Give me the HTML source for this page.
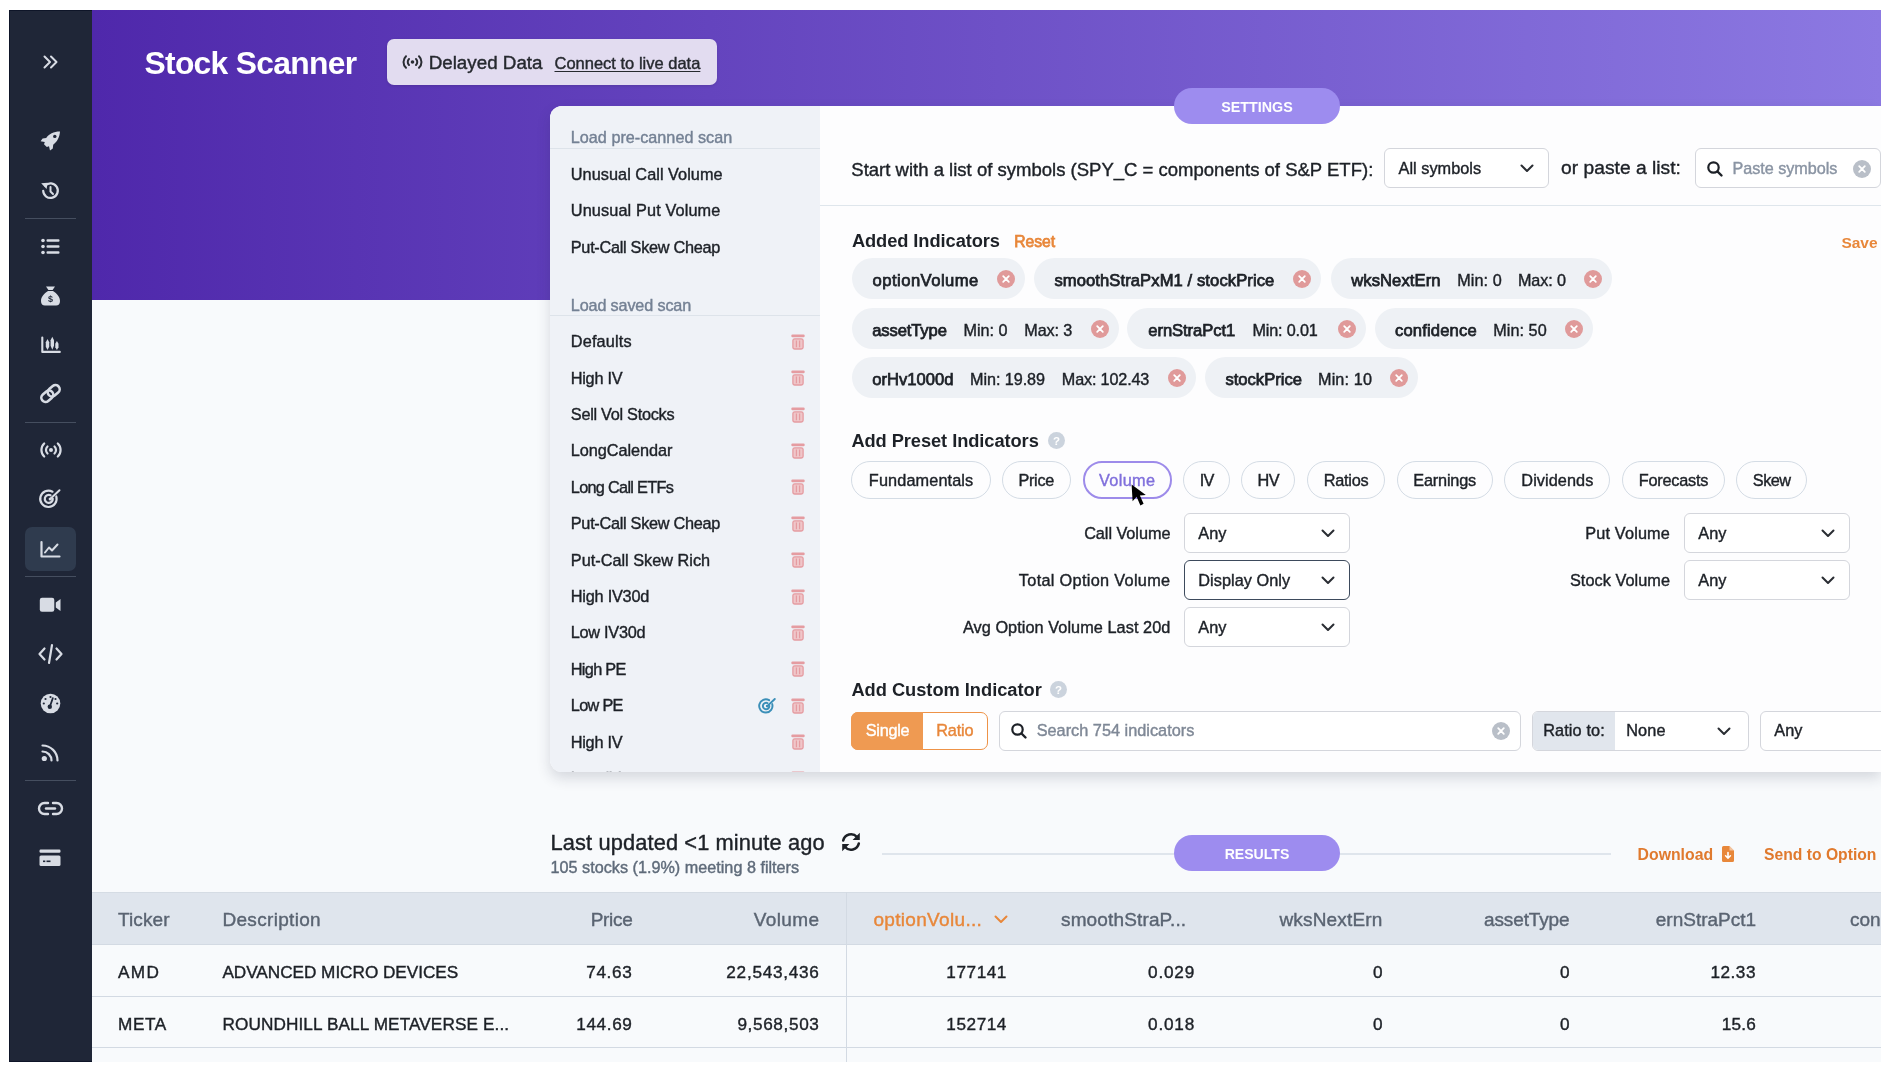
<!DOCTYPE html>
<html><head><meta charset="utf-8"><style>
html,body{margin:0;padding:0;background:#fff;width:1894px;height:1074px;overflow:hidden;}
body{position:relative;font-family:"Liberation Sans",sans-serif;color:#1f2329;}
.a{position:absolute;box-sizing:border-box;}
.t{position:absolute;white-space:nowrap;line-height:normal;}
.s{-webkit-text-stroke:0.4px currentColor;}
.m{-webkit-text-stroke:0.75px currentColor;}
svg{position:absolute;overflow:visible;}
</style></head><body>
<div id="root" style="position:absolute;left:0;top:0;width:1894px;height:1074px;will-change:transform">
<div class="a" style="left:9px;top:10px;width:1872px;height:1052px;background:#f8fafc"></div>
<div class="a" style="left:92px;top:10px;width:1789px;height:290px;background:linear-gradient(90deg,#4f28ab 0%,#8c79e2 100%)"></div>
<div class="a" style="left:9px;top:10px;width:83px;height:1052px;background:#1f2637;border-left:1px solid #0e1528;border-top:1px solid #0e1528;border-bottom:1px solid #0e1528"></div>
<div class="a" style="left:25px;top:218px;width:51px;height:1px;background:#454e5f"></div>
<div class="a" style="left:25px;top:422px;width:51px;height:1px;background:#454e5f"></div>
<div class="a" style="left:25px;top:576px;width:51px;height:1px;background:#454e5f"></div>
<div class="a" style="left:25px;top:780px;width:51px;height:1px;background:#454e5f"></div>
<div class="a" style="left:25px;top:527px;width:51px;height:44px;border-radius:7px;background:#2f3b4e"></div>
<svg style="left:43px;top:55px" width="15" height="14" viewBox="0 0 15 14"><path fill="none" stroke="#d8dce4" stroke-linecap="round" stroke-linejoin="round" stroke-width="2" d="M1.5 1.5 L7 7 L1.5 12.5 M8 1.5 L13.5 7 L8 12.5"/></svg>
<svg style="left:40px;top:131px" width="21" height="20" viewBox="0 0 21 20"><path fill="#d8dce4" d="M20 0.6 C13.5 0.6 9 3.2 6.2 7 L2.6 7.4 L0.6 10.2 L4.8 11 L4 13.2 L6.8 16 L9 15.2 L10 19.6 L12.8 17.4 L13.2 13.8 C17 11 19.6 6.6 20 0.6 Z"/><circle cx="14.8" cy="5.4" r="1.7" fill="#1f2637"/></svg>
<svg style="left:40px;top:181px" width="21" height="20" viewBox="0 0 21 20"><path fill="none" stroke="#d8dce4" stroke-linecap="round" stroke-linejoin="round" stroke-width="2.2" d="M3.2 9.8 A7.3 7.3 0 1 0 5.2 4.6"/><path fill="#d8dce4" d="M1.2 2.2 L7.6 1.8 L6.6 8 Z"/><path fill="none" stroke="#d8dce4" stroke-linecap="round" stroke-linejoin="round" stroke-width="2" d="M10.5 6 V10.5 L13 13"/></svg>
<svg style="left:41px;top:238px" width="19" height="17" viewBox="0 0 19 17"><g fill="#d8dce4"><circle cx="2" cy="2.5" r="1.8"/><circle cx="2" cy="8.5" r="1.8"/><circle cx="2" cy="14.5" r="1.8"/><rect x="5.5" y="1.3" width="13" height="2.4" rx="1"/><rect x="5.5" y="7.3" width="13" height="2.4" rx="1"/><rect x="5.5" y="13.3" width="13" height="2.4" rx="1"/></g></svg>
<svg style="left:40px;top:286px" width="21" height="20" viewBox="0 0 21 20"><path fill="#d8dce4" d="M6 0.5 H15 L12.6 4 H8.4 Z M8 5 H13 C17 7.5 20 11 20 15 C20 18 18.5 19.5 16 19.5 H5 C2.5 19.5 1 18 1 15 C1 11 4 7.5 8 5 Z"/><text x="10.5" y="16.2" font-family="Liberation Sans" font-weight="700" font-size="9" text-anchor="middle" fill="#1f2738">$</text></svg>
<svg style="left:40px;top:336px" width="21" height="18" viewBox="0 0 21 18"><path fill="none" stroke="#d8dce4" stroke-linecap="round" stroke-linejoin="round" stroke-width="2.1" d="M2.3 1.5 V15.9 H19.8"/><g fill="#d8dce4"><path d="M7.5 3 L9.2 6.3 V10.7 L7.5 14 L5.8 10.7 V6.3 Z"/><path d="M12.3 0.8 L14 4.3 V9.8 L12.3 13.8 L10.6 9.8 V4.3 Z"/><path d="M16.9 5 L18.5 7.8 V11.2 L16.9 14 L15.3 11.2 V7.8 Z"/></g></svg>
<svg style="left:39px;top:384px" width="23" height="19" viewBox="0 0 23 19"><g transform="rotate(-40 11.5 9.5)" fill="none" stroke="#d8dce4" stroke-width="2.6"><rect x="0.8" y="5.3" width="13" height="8.4" rx="4.2"/><rect x="9.2" y="5.3" width="13" height="8.4" rx="4.2"/></g></svg>
<svg style="left:40px;top:442px" width="22" height="16" viewBox="0 0 22 16"><g fill="none" stroke="#d8dce4" stroke-linecap="round" stroke-linejoin="round" stroke-width="2.2"><path d="M4.2 1.5 A9 9 0 0 0 4.2 14.5"/><path d="M17.8 1.5 A9 9 0 0 1 17.8 14.5"/><path d="M7.5 4.5 A4.8 4.8 0 0 0 7.5 11.5"/><path d="M14.5 4.5 A4.8 4.8 0 0 1 14.5 11.5"/></g><circle cx="11" cy="8" r="2" fill="#d8dce4"/></svg>
<svg style="left:40px;top:489px" width="21" height="21" viewBox="0 0 21 21"><g fill="none" stroke="#d8dce4" stroke-linecap="round" stroke-linejoin="round" stroke-width="2.2"><path d="M16.3 7.5 A8.2 8.2 0 1 1 12.5 2.7"/><path d="M12.8 9.8 A4 4 0 1 1 10.5 6.3"/></g><path fill="none" stroke="#d8dce4" stroke-linecap="round" stroke-linejoin="round" stroke-width="2" d="M10.2 10 L19.5 1.2"/><circle cx="10.2" cy="10" r="1.6" fill="#d8dce4"/></svg>
<svg style="left:40px;top:541px" width="21" height="17" viewBox="0 0 21 17"><path fill="none" stroke="#d8dce4" stroke-linecap="round" stroke-linejoin="round" stroke-width="2.2" d="M1.5 1 V15.5 H19.5"/><path fill="none" stroke="#d8dce4" stroke-linecap="round" stroke-linejoin="round" stroke-width="2" d="M5 11.5 L9 6.5 L12 9.5 L17.5 3.5"/></svg>
<svg style="left:39px;top:597px" width="23" height="16" viewBox="0 0 23 16"><rect x="0.8" y="0.8" width="14.5" height="14" rx="2.2" fill="#d8dce4"/><path fill="#d8dce4" d="M16.8 5.5 L21.5 2 V14 L16.8 10.5 Z"/></svg>
<svg style="left:38px;top:644px" width="25" height="20" viewBox="0 0 25 20"><g fill="none" stroke="#d8dce4" stroke-linecap="round" stroke-linejoin="round" stroke-width="2.2"><path d="M6.5 4.5 L1.5 10 L6.5 15.5"/><path d="M18.5 4.5 L23.5 10 L18.5 15.5"/><path d="M14 1 L11 19"/></g></svg>
<svg style="left:40px;top:693px" width="21" height="21" viewBox="0 0 21 21"><circle cx="10.5" cy="10.5" r="9.8" fill="#d8dce4"/><g fill="#1f2738"><circle cx="10.5" cy="4" r="1.1"/><circle cx="5.5" cy="6" r="1.1"/><circle cx="15.5" cy="6" r="1.1"/><circle cx="3.8" cy="10.5" r="1.1"/><circle cx="17.2" cy="10.5" r="1.1"/><circle cx="9.8" cy="13.8" r="2.2"/></g><path stroke="#1f2738" stroke-width="1.8" stroke-linecap="round" d="M9.8 13.8 L12.8 5.2"/></svg>
<svg style="left:41px;top:744px" width="19" height="18" viewBox="0 0 19 18"><circle cx="3.3" cy="14.5" r="2.6" fill="#d8dce4"/><g fill="none" stroke="#d8dce4" stroke-linecap="round" stroke-linejoin="round" stroke-width="2.2"><path d="M1.5 7.5 A9 9 0 0 1 10.5 16.5"/><path d="M1.5 1.5 A15 15 0 0 1 16.5 16.5"/></g></svg>
<svg style="left:38px;top:801px" width="25" height="15" viewBox="0 0 25 15"><g fill="none" stroke="#d8dce4" stroke-linecap="round" stroke-linejoin="round" stroke-width="2.4"><path d="M10 2 H6.5 A5.5 5.5 0 0 0 6.5 13 H10"/><path d="M15 2 H18.5 A5.5 5.5 0 0 1 18.5 13 H15"/><path d="M8 7.5 H17"/></g></svg>
<svg style="left:39px;top:849px" width="23" height="18" viewBox="0 0 23 18"><rect x="0.5" y="0.5" width="21" height="3.3" rx="1.2" fill="#d8dce4"/><rect x="0.5" y="6.5" width="21" height="10.5" rx="1.5" fill="#d8dce4"/><rect x="4" y="11.5" width="2.3" height="1.6" fill="#1f2738"/><rect x="7.5" y="11.5" width="4" height="1.6" fill="#1f2738"/></svg>
<div class="t" style="left:144.5px;top:45.0px;font-size:31.8px;font-weight:700;color:#fff;letter-spacing:-0.700px;">Stock Scanner</div>
<div class="a" style="left:387px;top:39px;width:330px;height:46px;border-radius:7px;background:#e2dcf0;box-shadow:0 1px 3px rgba(0,0,0,.12)"></div>
<svg style="left:402px;top:54px" width="21" height="16" viewBox="0 0 21 16"><g fill="none" stroke="#2a2d33" stroke-width="2" stroke-linecap="round"><path d="M4 2.2 A8 8 0 0 0 4 13.8"/><path d="M17 2.2 A8 8 0 0 1 17 13.8"/><path d="M7 5 A4.2 4.2 0 0 0 7 11"/><path d="M14 5 A4.2 4.2 0 0 1 14 11"/></g><circle cx="10.5" cy="8" r="1.8" fill="#2a2d33"/></svg>
<div class="t s" style="left:428.7px;top:52.0px;font-size:18.8px;font-weight:400;color:#26292f;">Delayed Data</div>
<div class="t s" style="left:554.5px;top:54.0px;font-size:16.5px;font-weight:400;color:#26292f;text-decoration:underline;text-underline-offset:2px">Connect to live data</div>
<div class="a" style="left:550px;top:106px;width:1331px;height:666px;border-radius:12px 0 0 12px;background:#fdfdfe;box-shadow:0 6px 14px rgba(30,40,60,.16)"></div>
<div class="a" style="left:550px;top:106px;width:270px;height:666px;border-radius:12px 0 0 12px;background:#eff2f7"></div>
<div class="a" style="left:1174px;top:88px;width:166px;height:36px;border-radius:18px;background:#9d8cef"></div>
<div class="t" style="left:1257.0px;transform:translateX(-50%);top:99.0px;font-size:14.3px;font-weight:700;color:#fff;">SETTINGS</div>
<div style="position:absolute;left:0;top:0;width:1894px;height:1074px;clip-path:inset(106px 1074px 302px 550px)">
<div class="t s" style="left:570.8px;top:128.0px;font-size:16.2px;font-weight:400;color:#748194;letter-spacing:0.015px;">Load pre-canned scan</div>
<div class="a" style="left:550px;top:148px;width:270px;height:1px;background:#dde3ea"></div>
<div class="t s" style="left:570.8px;top:165.0px;font-size:16.3px;font-weight:400;color:#1d2127;letter-spacing:0.038px;">Unusual Call Volume</div>
<div class="t s" style="left:570.8px;top:201.0px;font-size:16.3px;font-weight:400;color:#1d2127;letter-spacing:0.118px;">Unusual Put Volume</div>
<div class="t s" style="left:570.8px;top:238.0px;font-size:16.3px;font-weight:400;color:#1d2127;letter-spacing:-0.290px;">Put-Call Skew Cheap</div>
<div class="t s" style="left:570.8px;top:296.0px;font-size:16.2px;font-weight:400;color:#748194;letter-spacing:-0.142px;">Load saved scan</div>
<div class="a" style="left:550px;top:315px;width:270px;height:1px;background:#dde3ea"></div>
<div class="t s" style="left:570.8px;top:332.0px;font-size:16.3px;font-weight:400;color:#1d2127;letter-spacing:0.143px;">Defaults</div>
<svg style="left:790.8px;top:333.7px" width="14" height="16" viewBox="0 0 14 16"><rect x="0.3" y="0.6" width="13.4" height="2.6" rx="1.2" fill="#e59ca1"/><rect x="1.9" y="4.8" width="10.2" height="10.2" rx="1.8" fill="#efc6c9" stroke="#e59ca1" stroke-width="1.3"/><path stroke="#e59ca1" stroke-width="1.2" d="M5.4 6.5v6.8 M8.6 6.5v6.8"/></svg>
<div class="t s" style="left:570.8px;top:369.0px;font-size:16.3px;font-weight:400;color:#1d2127;letter-spacing:-0.276px;">High IV</div>
<svg style="left:790.8px;top:370.1px" width="14" height="16" viewBox="0 0 14 16"><rect x="0.3" y="0.6" width="13.4" height="2.6" rx="1.2" fill="#e59ca1"/><rect x="1.9" y="4.8" width="10.2" height="10.2" rx="1.8" fill="#efc6c9" stroke="#e59ca1" stroke-width="1.3"/><path stroke="#e59ca1" stroke-width="1.2" d="M5.4 6.5v6.8 M8.6 6.5v6.8"/></svg>
<div class="t s" style="left:570.8px;top:405.0px;font-size:16.3px;font-weight:400;color:#1d2127;letter-spacing:-0.280px;">Sell Vol Stocks</div>
<svg style="left:790.8px;top:406.5px" width="14" height="16" viewBox="0 0 14 16"><rect x="0.3" y="0.6" width="13.4" height="2.6" rx="1.2" fill="#e59ca1"/><rect x="1.9" y="4.8" width="10.2" height="10.2" rx="1.8" fill="#efc6c9" stroke="#e59ca1" stroke-width="1.3"/><path stroke="#e59ca1" stroke-width="1.2" d="M5.4 6.5v6.8 M8.6 6.5v6.8"/></svg>
<div class="t s" style="left:570.8px;top:441.0px;font-size:16.3px;font-weight:400;color:#1d2127;letter-spacing:-0.065px;">LongCalendar</div>
<svg style="left:790.8px;top:442.9px" width="14" height="16" viewBox="0 0 14 16"><rect x="0.3" y="0.6" width="13.4" height="2.6" rx="1.2" fill="#e59ca1"/><rect x="1.9" y="4.8" width="10.2" height="10.2" rx="1.8" fill="#efc6c9" stroke="#e59ca1" stroke-width="1.3"/><path stroke="#e59ca1" stroke-width="1.2" d="M5.4 6.5v6.8 M8.6 6.5v6.8"/></svg>
<div class="t s" style="left:570.8px;top:478.0px;font-size:16.3px;font-weight:400;color:#1d2127;letter-spacing:-0.700px;">Long Call ETFs</div>
<svg style="left:790.8px;top:479.3px" width="14" height="16" viewBox="0 0 14 16"><rect x="0.3" y="0.6" width="13.4" height="2.6" rx="1.2" fill="#e59ca1"/><rect x="1.9" y="4.8" width="10.2" height="10.2" rx="1.8" fill="#efc6c9" stroke="#e59ca1" stroke-width="1.3"/><path stroke="#e59ca1" stroke-width="1.2" d="M5.4 6.5v6.8 M8.6 6.5v6.8"/></svg>
<div class="t s" style="left:570.8px;top:514.0px;font-size:16.3px;font-weight:400;color:#1d2127;letter-spacing:-0.290px;">Put-Call Skew Cheap</div>
<svg style="left:790.8px;top:515.7px" width="14" height="16" viewBox="0 0 14 16"><rect x="0.3" y="0.6" width="13.4" height="2.6" rx="1.2" fill="#e59ca1"/><rect x="1.9" y="4.8" width="10.2" height="10.2" rx="1.8" fill="#efc6c9" stroke="#e59ca1" stroke-width="1.3"/><path stroke="#e59ca1" stroke-width="1.2" d="M5.4 6.5v6.8 M8.6 6.5v6.8"/></svg>
<div class="t s" style="left:570.8px;top:551.0px;font-size:16.3px;font-weight:400;color:#1d2127;">Put-Call Skew Rich</div>
<svg style="left:790.8px;top:552.1px" width="14" height="16" viewBox="0 0 14 16"><rect x="0.3" y="0.6" width="13.4" height="2.6" rx="1.2" fill="#e59ca1"/><rect x="1.9" y="4.8" width="10.2" height="10.2" rx="1.8" fill="#efc6c9" stroke="#e59ca1" stroke-width="1.3"/><path stroke="#e59ca1" stroke-width="1.2" d="M5.4 6.5v6.8 M8.6 6.5v6.8"/></svg>
<div class="t s" style="left:570.8px;top:587.0px;font-size:16.3px;font-weight:400;color:#1d2127;letter-spacing:-0.228px;">High IV30d</div>
<svg style="left:790.8px;top:588.5px" width="14" height="16" viewBox="0 0 14 16"><rect x="0.3" y="0.6" width="13.4" height="2.6" rx="1.2" fill="#e59ca1"/><rect x="1.9" y="4.8" width="10.2" height="10.2" rx="1.8" fill="#efc6c9" stroke="#e59ca1" stroke-width="1.3"/><path stroke="#e59ca1" stroke-width="1.2" d="M5.4 6.5v6.8 M8.6 6.5v6.8"/></svg>
<div class="t s" style="left:570.8px;top:623.0px;font-size:16.3px;font-weight:400;color:#1d2127;letter-spacing:-0.278px;">Low IV30d</div>
<svg style="left:790.8px;top:624.9px" width="14" height="16" viewBox="0 0 14 16"><rect x="0.3" y="0.6" width="13.4" height="2.6" rx="1.2" fill="#e59ca1"/><rect x="1.9" y="4.8" width="10.2" height="10.2" rx="1.8" fill="#efc6c9" stroke="#e59ca1" stroke-width="1.3"/><path stroke="#e59ca1" stroke-width="1.2" d="M5.4 6.5v6.8 M8.6 6.5v6.8"/></svg>
<div class="t s" style="left:570.8px;top:660.0px;font-size:16.3px;font-weight:400;color:#1d2127;letter-spacing:-0.700px;">High PE</div>
<svg style="left:790.8px;top:661.3px" width="14" height="16" viewBox="0 0 14 16"><rect x="0.3" y="0.6" width="13.4" height="2.6" rx="1.2" fill="#e59ca1"/><rect x="1.9" y="4.8" width="10.2" height="10.2" rx="1.8" fill="#efc6c9" stroke="#e59ca1" stroke-width="1.3"/><path stroke="#e59ca1" stroke-width="1.2" d="M5.4 6.5v6.8 M8.6 6.5v6.8"/></svg>
<div class="t s" style="left:570.8px;top:696.0px;font-size:16.3px;font-weight:400;color:#1d2127;letter-spacing:-0.700px;">Low PE</div>
<svg style="left:790.8px;top:697.7px" width="14" height="16" viewBox="0 0 14 16"><rect x="0.3" y="0.6" width="13.4" height="2.6" rx="1.2" fill="#e59ca1"/><rect x="1.9" y="4.8" width="10.2" height="10.2" rx="1.8" fill="#efc6c9" stroke="#e59ca1" stroke-width="1.3"/><path stroke="#e59ca1" stroke-width="1.2" d="M5.4 6.5v6.8 M8.6 6.5v6.8"/></svg>
<div class="t s" style="left:570.8px;top:733.0px;font-size:16.3px;font-weight:400;color:#1d2127;letter-spacing:-0.276px;">High IV</div>
<svg style="left:790.8px;top:734.1px" width="14" height="16" viewBox="0 0 14 16"><rect x="0.3" y="0.6" width="13.4" height="2.6" rx="1.2" fill="#e59ca1"/><rect x="1.9" y="4.8" width="10.2" height="10.2" rx="1.8" fill="#efc6c9" stroke="#e59ca1" stroke-width="1.3"/><path stroke="#e59ca1" stroke-width="1.2" d="M5.4 6.5v6.8 M8.6 6.5v6.8"/></svg>
<div class="t s" style="left:570.8px;top:769.0px;font-size:16.3px;font-weight:400;color:#1d2127;">Low IV</div>
<svg style="left:790.8px;top:770.5px" width="14" height="16" viewBox="0 0 14 16"><rect x="0.3" y="0.6" width="13.4" height="2.6" rx="1.2" fill="#e59ca1"/><rect x="1.9" y="4.8" width="10.2" height="10.2" rx="1.8" fill="#efc6c9" stroke="#e59ca1" stroke-width="1.3"/><path stroke="#e59ca1" stroke-width="1.2" d="M5.4 6.5v6.8 M8.6 6.5v6.8"/></svg>
<svg style="left:759px;top:697.5px" width="17" height="17" viewBox="0 0 21 21"><g fill="none" stroke="#3b8fb8" stroke-linecap="round" stroke-width="2.4"><path d="M16.3 7.5 A8.2 8.2 0 1 1 12.5 2.7"/><path d="M12.8 9.8 A4 4 0 1 1 10.5 6.3"/><path d="M10.2 10 L19.5 1.2"/></g><circle cx="10.2" cy="10" r="1.8" fill="#3b8fb8"/></svg>
</div>
<div class="t s" style="left:851.3px;top:159.0px;font-size:18.5px;font-weight:400;color:#1d2127;letter-spacing:0.009px;">Start with a list of symbols (SPY_C = components of S&amp;P ETF):</div>
<div class="a" style="left:1384px;top:148px;width:165px;height:40px;border:1.5px solid #d4d6dc;border-radius:6px;background:#fff"></div>
<div class="t s" style="left:1398.5px;top:159.0px;font-size:16.3px;font-weight:400;color:#1d2127;letter-spacing:0.028px;">All symbols</div>
<svg style="left:1520px;top:164px" width="14" height="9" viewBox="0 0 14 9"><path fill="none" stroke="#2a2d33" stroke-width="2" stroke-linecap="round" stroke-linejoin="round" d="M1.5 1.5 L7 7 L12.5 1.5"/></svg>
<div class="t s" style="left:1561.0px;top:157.0px;font-size:19.2px;font-weight:400;color:#1d2127;letter-spacing:0.032px;">or paste a list:</div>
<div class="a" style="left:1695px;top:148px;width:186px;height:40px;border:1.5px solid #d4d6dc;border-radius:6px;background:#fff"></div>
<svg style="left:1707px;top:161px" width="16" height="16" viewBox="0 0 16 16"><circle cx="6.5" cy="6.5" r="5.2" fill="none" stroke="#1d2127" stroke-width="2.2"/><path stroke="#1d2127" stroke-width="2.4" stroke-linecap="round" d="M10.5 10.5 L14.5 14.5"/></svg>
<div class="t s" style="left:1732.5px;top:159.0px;font-size:16.2px;font-weight:400;color:#8a94a3;letter-spacing:-0.028px;">Paste symbols</div>
<svg style="left:1853px;top:160px" width="18" height="18" viewBox="0 0 18 18"><circle cx="9" cy="9" r="9" fill="#b9bfc8"/><path stroke="#fff" stroke-width="1.8" stroke-linecap="round" d="M6.2 6.2 L11.8 11.8 M11.8 6.2 L6.2 11.8"/></svg>
<div class="a" style="left:820px;top:205px;width:1061px;height:1px;background:#dfe6ec"></div>
<div class="t" style="left:851.9px;top:230.0px;font-size:18.3px;font-weight:700;color:#1d2127;letter-spacing:-0.078px;">Added Indicators</div>
<div class="t m" style="left:1014.2px;top:233.0px;font-size:15.7px;font-weight:400;color:#e8873a;letter-spacing:-0.003px;">Reset</div>
<div class="t" style="right:16.4px;top:234.0px;font-size:15.5px;font-weight:700;color:#e8873a;">Save</div>
<div class="a" style="left:852px;top:258px;width:173px;height:41px;border-radius:21px;background:#eef1f5"></div>
<div class="t m" style="left:872.6px;top:271.0px;font-size:16.6px;font-weight:400;color:#1d2127;letter-spacing:0.464px;">optionVolume</div>
<svg style="left:997px;top:269.5px" width="18" height="18" viewBox="0 0 18 18"><circle cx="9" cy="9" r="9" fill="#e09a9a"/><path stroke="#fff" stroke-width="1.8" stroke-linecap="round" d="M6.2 6.2 L11.8 11.8 M11.8 6.2 L6.2 11.8"/></svg>
<div class="a" style="left:1033.5px;top:258px;width:287.5px;height:41px;border-radius:21px;background:#eef1f5"></div>
<div class="t m" style="left:1054.4px;top:271.0px;font-size:16.6px;font-weight:400;color:#1d2127;letter-spacing:0.088px;">smoothStraPxM1 / stockPrice</div>
<svg style="left:1293px;top:269.5px" width="18" height="18" viewBox="0 0 18 18"><circle cx="9" cy="9" r="9" fill="#e09a9a"/><path stroke="#fff" stroke-width="1.8" stroke-linecap="round" d="M6.2 6.2 L11.8 11.8 M11.8 6.2 L6.2 11.8"/></svg>
<div class="a" style="left:1330.6px;top:258px;width:281.8000000000002px;height:41px;border-radius:21px;background:#eef1f5"></div>
<div class="t m" style="left:1351.2px;top:271.0px;font-size:16.6px;font-weight:400;color:#1d2127;letter-spacing:0.094px;">wksNextErn</div>
<div class="t s" style="left:1457.3px;top:271.0px;font-size:16.2px;font-weight:400;color:#1d2127;letter-spacing:0.077px;">Min: 0</div>
<div class="t s" style="left:1517.9px;top:271.0px;font-size:16.2px;font-weight:400;color:#1d2127;letter-spacing:-0.104px;">Max: 0</div>
<svg style="left:1584.4px;top:269.5px" width="18" height="18" viewBox="0 0 18 18"><circle cx="9" cy="9" r="9" fill="#e09a9a"/><path stroke="#fff" stroke-width="1.8" stroke-linecap="round" d="M6.2 6.2 L11.8 11.8 M11.8 6.2 L6.2 11.8"/></svg>
<div class="a" style="left:852px;top:308px;width:267px;height:41px;border-radius:21px;background:#eef1f5"></div>
<div class="t m" style="left:872.2px;top:321.0px;font-size:16.6px;font-weight:400;color:#1d2127;letter-spacing:-0.121px;">assetType</div>
<div class="t s" style="left:963.5px;top:321.0px;font-size:16.2px;font-weight:400;color:#1d2127;letter-spacing:-0.003px;">Min: 0</div>
<div class="t s" style="left:1024.3px;top:321.0px;font-size:16.2px;font-weight:400;color:#1d2127;letter-spacing:-0.124px;">Max: 3</div>
<svg style="left:1091px;top:319.5px" width="18" height="18" viewBox="0 0 18 18"><circle cx="9" cy="9" r="9" fill="#e09a9a"/><path stroke="#fff" stroke-width="1.8" stroke-linecap="round" d="M6.2 6.2 L11.8 11.8 M11.8 6.2 L6.2 11.8"/></svg>
<div class="a" style="left:1127px;top:308px;width:239px;height:41px;border-radius:21px;background:#eef1f5"></div>
<div class="t m" style="left:1148.3px;top:321.0px;font-size:16.6px;font-weight:400;color:#1d2127;letter-spacing:-0.075px;">ernStraPct1</div>
<div class="t s" style="left:1252.4px;top:321.0px;font-size:16.2px;font-weight:400;color:#1d2127;letter-spacing:-0.154px;">Min: 0.01</div>
<svg style="left:1338px;top:319.5px" width="18" height="18" viewBox="0 0 18 18"><circle cx="9" cy="9" r="9" fill="#e09a9a"/><path stroke="#fff" stroke-width="1.8" stroke-linecap="round" d="M6.2 6.2 L11.8 11.8 M11.8 6.2 L6.2 11.8"/></svg>
<div class="a" style="left:1374.5px;top:308px;width:218.20000000000005px;height:41px;border-radius:21px;background:#eef1f5"></div>
<div class="t m" style="left:1395.0px;top:321.0px;font-size:16.6px;font-weight:400;color:#1d2127;letter-spacing:0.156px;">confidence</div>
<div class="t s" style="left:1493.3px;top:321.0px;font-size:16.2px;font-weight:400;color:#1d2127;letter-spacing:0.046px;">Min: 50</div>
<svg style="left:1564.7px;top:319.5px" width="18" height="18" viewBox="0 0 18 18"><circle cx="9" cy="9" r="9" fill="#e09a9a"/><path stroke="#fff" stroke-width="1.8" stroke-linecap="round" d="M6.2 6.2 L11.8 11.8 M11.8 6.2 L6.2 11.8"/></svg>
<div class="a" style="left:852px;top:357px;width:344px;height:41px;border-radius:21px;background:#eef1f5"></div>
<div class="t m" style="left:872.2px;top:370.0px;font-size:16.6px;font-weight:400;color:#1d2127;letter-spacing:0.011px;">orHv1000d</div>
<div class="t s" style="left:970.1px;top:370.0px;font-size:16.2px;font-weight:400;color:#1d2127;letter-spacing:-0.072px;">Min: 19.89</div>
<div class="t s" style="left:1061.8px;top:370.0px;font-size:16.2px;font-weight:400;color:#1d2127;letter-spacing:-0.156px;">Max: 102.43</div>
<svg style="left:1168px;top:368.5px" width="18" height="18" viewBox="0 0 18 18"><circle cx="9" cy="9" r="9" fill="#e09a9a"/><path stroke="#fff" stroke-width="1.8" stroke-linecap="round" d="M6.2 6.2 L11.8 11.8 M11.8 6.2 L6.2 11.8"/></svg>
<div class="a" style="left:1205px;top:357px;width:212.5999999999999px;height:41px;border-radius:21px;background:#eef1f5"></div>
<div class="t m" style="left:1225.4px;top:370.0px;font-size:16.6px;font-weight:400;color:#1d2127;letter-spacing:0.004px;">stockPrice</div>
<div class="t s" style="left:1318.0px;top:370.0px;font-size:16.2px;font-weight:400;color:#1d2127;letter-spacing:0.146px;">Min: 10</div>
<svg style="left:1389.6px;top:368.5px" width="18" height="18" viewBox="0 0 18 18"><circle cx="9" cy="9" r="9" fill="#e09a9a"/><path stroke="#fff" stroke-width="1.8" stroke-linecap="round" d="M6.2 6.2 L11.8 11.8 M11.8 6.2 L6.2 11.8"/></svg>
<div class="t" style="left:851.4px;top:430.0px;font-size:18.3px;font-weight:700;color:#1d2127;letter-spacing:-0.077px;">Add Preset Indicators</div>
<svg style="left:1047.8px;top:431.8px" width="17" height="17" viewBox="0 0 17 17"><circle cx="8.5" cy="8.5" r="8.5" fill="#cbd3dd"/><text x="8.5" y="12.6" font-family="Liberation Sans" font-weight="700" font-size="11.5" text-anchor="middle" fill="#fff">?</text></svg>
<div class="a" style="left:851.4px;top:461px;width:139.39999999999998px;height:38px;border:1.6px solid #d4dce5;border-radius:19px;background:#fdfdfe"></div>
<div class="t s" style="left:921.1px;transform:translateX(-50%);top:471.0px;font-size:16.3px;font-weight:400;color:#1d2127;letter-spacing:0.110px;">Fundamentals</div>
<div class="a" style="left:1001.7px;top:461px;width:68.89999999999986px;height:38px;border:1.6px solid #d4dce5;border-radius:19px;background:#fdfdfe"></div>
<div class="t s" style="left:1036.2px;transform:translateX(-50%);top:471.0px;font-size:16.3px;font-weight:400;color:#1d2127;letter-spacing:-0.310px;">Price</div>
<div class="a" style="left:1082.5px;top:461px;width:89.5px;height:38px;border:2px solid #9d8bea;border-radius:19px;background:#fdfdfe"></div>
<div class="t s" style="left:1127.2px;transform:translateX(-50%);top:471.0px;font-size:16.3px;font-weight:400;color:#8070dc;letter-spacing:0.326px;">Volume</div>
<div class="a" style="left:1183.4px;top:461px;width:46.59999999999991px;height:38px;border:1.6px solid #d4dce5;border-radius:19px;background:#fdfdfe"></div>
<div class="t s" style="left:1206.7px;transform:translateX(-50%);top:471.0px;font-size:16.3px;font-weight:400;color:#1d2127;letter-spacing:-0.700px;">IV</div>
<div class="a" style="left:1241px;top:461px;width:54.40000000000009px;height:38px;border:1.6px solid #d4dce5;border-radius:19px;background:#fdfdfe"></div>
<div class="t s" style="left:1268.2px;transform:translateX(-50%);top:471.0px;font-size:16.3px;font-weight:400;color:#1d2127;letter-spacing:-0.700px;">HV</div>
<div class="a" style="left:1306.9px;top:461px;width:78.39999999999986px;height:38px;border:1.6px solid #d4dce5;border-radius:19px;background:#fdfdfe"></div>
<div class="t s" style="left:1346.1px;transform:translateX(-50%);top:471.0px;font-size:16.3px;font-weight:400;color:#1d2127;letter-spacing:-0.261px;">Ratios</div>
<div class="a" style="left:1396.6px;top:461px;width:96.20000000000005px;height:38px;border:1.6px solid #d4dce5;border-radius:19px;background:#fdfdfe"></div>
<div class="t s" style="left:1444.7px;transform:translateX(-50%);top:471.0px;font-size:16.3px;font-weight:400;color:#1d2127;letter-spacing:-0.191px;">Earnings</div>
<div class="a" style="left:1504.4px;top:461px;width:106.0px;height:38px;border:1.6px solid #d4dce5;border-radius:19px;background:#fdfdfe"></div>
<div class="t s" style="left:1557.4px;transform:translateX(-50%);top:471.0px;font-size:16.3px;font-weight:400;color:#1d2127;letter-spacing:0.065px;">Dividends</div>
<div class="a" style="left:1622px;top:461px;width:102.90000000000009px;height:38px;border:1.6px solid #d4dce5;border-radius:19px;background:#fdfdfe"></div>
<div class="t s" style="left:1673.5px;transform:translateX(-50%);top:471.0px;font-size:16.3px;font-weight:400;color:#1d2127;letter-spacing:-0.207px;">Forecasts</div>
<div class="a" style="left:1735.9px;top:461px;width:71.5px;height:38px;border:1.6px solid #d4dce5;border-radius:19px;background:#fdfdfe"></div>
<div class="t s" style="left:1771.7px;transform:translateX(-50%);top:471.0px;font-size:16.3px;font-weight:400;color:#1d2127;letter-spacing:-0.520px;">Skew</div>
<svg style="left:1131px;top:484px" width="16" height="23" viewBox="0 0 16 23"><path fill="#000" d="M0.6 0.6 L1.6 17.2 L5.6 12.8 L9.4 21.4 L12.6 19.8 L8.9 11.6 L14.8 11.1 Z"/></svg>
<div class="t s" style="right:723.6px;top:524.0px;font-size:16.3px;font-weight:400;color:#1d2127;letter-spacing:-0.058px;">Call Volume</div>
<div class="a" style="left:1184px;top:513px;width:166px;height:40px;border:1.5px solid #d4d6dc;border-radius:6px;background:#fff"></div>
<div class="t s" style="left:1198.3px;top:524.0px;font-size:16.3px;font-weight:400;color:#1d2127;letter-spacing:0.055px;">Any</div>
<svg style="left:1321px;top:529px" width="14" height="9" viewBox="0 0 14 9"><path fill="none" stroke="#2a2d33" stroke-width="2" stroke-linecap="round" stroke-linejoin="round" d="M1.5 1.5 L7 7 L12.5 1.5"/></svg>
<div class="t s" style="right:723.6px;top:571.0px;font-size:16.3px;font-weight:400;color:#1d2127;letter-spacing:0.307px;">Total Option Volume</div>
<div class="a" style="left:1184px;top:560px;width:166px;height:40px;border:1.8px solid #3d4a5c;border-radius:6px;background:#fff"></div>
<div class="t s" style="left:1198.3px;top:571.0px;font-size:16.3px;font-weight:400;color:#1d2127;letter-spacing:0.037px;">Display Only</div>
<svg style="left:1321px;top:576px" width="14" height="9" viewBox="0 0 14 9"><path fill="none" stroke="#2a2d33" stroke-width="2" stroke-linecap="round" stroke-linejoin="round" d="M1.5 1.5 L7 7 L12.5 1.5"/></svg>
<div class="t s" style="right:723.6px;top:618.0px;font-size:16.3px;font-weight:400;color:#1d2127;letter-spacing:0.056px;">Avg Option Volume Last 20d</div>
<div class="a" style="left:1184px;top:607px;width:166px;height:40px;border:1.5px solid #d4d6dc;border-radius:6px;background:#fff"></div>
<div class="t s" style="left:1198.3px;top:618.0px;font-size:16.3px;font-weight:400;color:#1d2127;letter-spacing:0.055px;">Any</div>
<svg style="left:1321px;top:623px" width="14" height="9" viewBox="0 0 14 9"><path fill="none" stroke="#2a2d33" stroke-width="2" stroke-linecap="round" stroke-linejoin="round" d="M1.5 1.5 L7 7 L12.5 1.5"/></svg>
<div class="t s" style="right:224.0px;top:524.0px;font-size:16.3px;font-weight:400;color:#1d2127;letter-spacing:0.137px;">Put Volume</div>
<div class="a" style="left:1684px;top:513px;width:166px;height:40px;border:1.5px solid #d4d6dc;border-radius:6px;background:#fff"></div>
<div class="t s" style="left:1698.3px;top:524.0px;font-size:16.3px;font-weight:400;color:#1d2127;letter-spacing:0.055px;">Any</div>
<svg style="left:1821px;top:529px" width="14" height="9" viewBox="0 0 14 9"><path fill="none" stroke="#2a2d33" stroke-width="2" stroke-linecap="round" stroke-linejoin="round" d="M1.5 1.5 L7 7 L12.5 1.5"/></svg>
<div class="t s" style="right:224.0px;top:571.0px;font-size:16.3px;font-weight:400;color:#1d2127;letter-spacing:0.040px;">Stock Volume</div>
<div class="a" style="left:1684px;top:560px;width:166px;height:40px;border:1.5px solid #d4d6dc;border-radius:6px;background:#fff"></div>
<div class="t s" style="left:1698.3px;top:571.0px;font-size:16.3px;font-weight:400;color:#1d2127;letter-spacing:0.055px;">Any</div>
<svg style="left:1821px;top:576px" width="14" height="9" viewBox="0 0 14 9"><path fill="none" stroke="#2a2d33" stroke-width="2" stroke-linecap="round" stroke-linejoin="round" d="M1.5 1.5 L7 7 L12.5 1.5"/></svg>
<div class="t" style="left:851.4px;top:679.0px;font-size:18.3px;font-weight:700;color:#1d2127;letter-spacing:-0.028px;">Add Custom Indicator</div>
<svg style="left:1050.0px;top:681.0px" width="17" height="17" viewBox="0 0 17 17"><circle cx="8.5" cy="8.5" r="8.5" fill="#cbd3dd"/><text x="8.5" y="12.6" font-family="Liberation Sans" font-weight="700" font-size="11.5" text-anchor="middle" fill="#fff">?</text></svg>
<div class="a" style="left:851.4px;top:711.6px;width:136.4px;height:38px;border:1.5px solid #ee9347;border-radius:7px;background:#fff"></div>
<div class="a" style="left:851.4px;top:711.6px;width:71.3px;height:38px;border-radius:7px 0 0 7px;background:#ef9a52"></div>
<div class="t s" style="left:887.5px;transform:translateX(-50%);top:721.0px;font-size:16.3px;font-weight:400;color:#fff;letter-spacing:-0.322px;">Single</div>
<div class="t s" style="left:954.8px;transform:translateX(-50%);top:721.0px;font-size:16.3px;font-weight:400;color:#e8873a;letter-spacing:-0.188px;">Ratio</div>
<div class="a" style="left:998.5px;top:711px;width:522px;height:40px;border:1.5px solid #d4d6dc;border-radius:6px;background:#fff"></div>
<svg style="left:1011px;top:723px" width="16" height="16" viewBox="0 0 16 16"><circle cx="6.5" cy="6.5" r="5.2" fill="none" stroke="#1d2127" stroke-width="2.2"/><path stroke="#1d2127" stroke-width="2.4" stroke-linecap="round" d="M10.5 10.5 L14.5 14.5"/></svg>
<div class="t s" style="left:1036.7px;top:721.0px;font-size:16.3px;font-weight:400;color:#7f8896;letter-spacing:0.007px;">Search 754 indicators</div>
<svg style="left:1492px;top:722px" width="18" height="18" viewBox="0 0 18 18"><circle cx="9" cy="9" r="9" fill="#b9bfc8"/><path stroke="#fff" stroke-width="1.8" stroke-linecap="round" d="M6.2 6.2 L11.8 11.8 M11.8 6.2 L6.2 11.8"/></svg>
<div class="a" style="left:1531.5px;top:710.5px;width:217.5px;height:40.5px;border:1.5px solid #d4d6dc;border-radius:6px;background:#fff;overflow:hidden"></div>
<div class="a" style="left:1532.5px;top:711.5px;width:82.3px;height:38.5px;border-radius:5px 0 0 5px;background:#e1e6ed"></div>
<div class="t s" style="left:1543.2px;top:721.0px;font-size:16.3px;font-weight:400;color:#1d2127;letter-spacing:0.112px;">Ratio to:</div>
<div class="t s" style="left:1626.2px;top:721.0px;font-size:16.3px;font-weight:400;color:#1d2127;letter-spacing:0.178px;">None</div>
<svg style="left:1717px;top:727px" width="14" height="9" viewBox="0 0 14 9"><path fill="none" stroke="#2a2d33" stroke-width="2" stroke-linecap="round" stroke-linejoin="round" d="M1.5 1.5 L7 7 L12.5 1.5"/></svg>
<div class="a" style="left:1760.4px;top:710.5px;width:130px;height:40.5px;border:1.5px solid #d4d6dc;border-radius:6px;background:#fff"></div>
<div class="t s" style="left:1774.3px;top:721.0px;font-size:16.3px;font-weight:400;color:#1d2127;letter-spacing:0.055px;">Any</div>
<div class="t s" style="left:550.6px;top:830.0px;font-size:21.8px;font-weight:400;color:#1d2127;letter-spacing:0.124px;">Last updated &lt;1 minute ago</div>
<svg style="left:840px;top:832px" width="22" height="20" viewBox="0 0 22 20"><g fill="none" stroke="#1d2127" stroke-width="2.6" stroke-linecap="round"><path d="M3.2 8.5 A8 8 0 0 1 17 5"/><path d="M18.8 11.5 A8 8 0 0 1 5 15"/></g><path fill="#1d2127" d="M19.8 0.8 V8 H12.6 Z M2.2 19.2 V12 H9.4 Z"/></svg>
<div class="t s" style="left:550.6px;top:858.0px;font-size:16.2px;font-weight:400;color:#5f6b7a;letter-spacing:0.006px;">105 stocks (1.9%) meeting 8 filters</div>
<div class="a" style="left:882px;top:853px;width:729px;height:1.5px;background:#dfe5ec"></div>
<div class="a" style="left:1174px;top:835px;width:166px;height:36px;border-radius:18px;background:#9d8cef"></div>
<div class="t" style="left:1257.0px;transform:translateX(-50%);top:846.0px;font-size:14.1px;font-weight:700;color:#fff;">RESULTS</div>
<div class="t" style="left:1637.6px;top:846.0px;font-size:15.8px;font-weight:700;color:#e07a2e;">Download</div>
<svg style="left:1722px;top:846px" width="12" height="16" viewBox="0 0 12 16"><path fill="#e8873a" d="M0 1.5 A1.5 1.5 0 0 1 1.5 0 H7.5 L12 4.5 V14.5 A1.5 1.5 0 0 1 10.5 16 H1.5 A1.5 1.5 0 0 1 0 14.5 Z"/><path fill="#fff" d="M7.5 0 V4.5 H12 Z" opacity=".5"/><path fill="none" stroke="#fff" stroke-width="1.6" stroke-linecap="round" d="M6 6.5 V12 M3.6 9.8 L6 12.2 L8.4 9.8"/></svg>
<div class="t" style="left:1764.0px;top:846.0px;font-size:15.7px;font-weight:700;color:#e07a2e;">Send to Option</div>
<div class="a" style="left:92px;top:892px;width:1789px;height:52px;background:#dfe5ed;border-top:1px solid #d5dce4"></div>
<div class="a" style="left:92px;top:944px;width:1789px;height:1px;background:#d3dae3"></div>
<div class="a" style="left:92px;top:996px;width:1789px;height:1px;background:#d3dae3"></div>
<div class="a" style="left:92px;top:1047px;width:1789px;height:1.3px;background:#d3dae3"></div>
<div class="a" style="left:846px;top:892px;width:1px;height:170px;background:#d3dae3"></div>
<div class="t s" style="left:118.0px;top:909.0px;font-size:19px;font-weight:400;color:#5a6472;letter-spacing:0.096px;">Ticker</div>
<div class="t s" style="left:222.4px;top:909.0px;font-size:19px;font-weight:400;color:#5a6472;letter-spacing:0.326px;">Description</div>
<div class="t s" style="right:1261.5px;top:909.0px;font-size:19px;font-weight:400;color:#5a6472;letter-spacing:-0.298px;">Price</div>
<div class="t s" style="right:1074.5px;top:909.0px;font-size:19px;font-weight:400;color:#5a6472;letter-spacing:0.405px;">Volume</div>
<div class="t s" style="left:873.4px;top:909.0px;font-size:19px;font-weight:400;color:#e8873a;letter-spacing:0.326px;">optionVolu...</div>
<svg style="left:994px;top:915px" width="14" height="9" viewBox="0 0 14 9"><path fill="none" stroke="#e8873a" stroke-width="2" stroke-linecap="round" stroke-linejoin="round" d="M1.5 1.5 L7 7 L12.5 1.5"/></svg>
<div class="t s" style="left:1061.0px;top:909.0px;font-size:19px;font-weight:400;color:#5a6472;letter-spacing:0.145px;">smoothStraP...</div>
<div class="t s" style="right:511.4px;top:909.0px;font-size:19px;font-weight:400;color:#5a6472;letter-spacing:0.183px;">wksNextErn</div>
<div class="t s" style="right:324.5px;top:909.0px;font-size:19px;font-weight:400;color:#5a6472;letter-spacing:-0.126px;">assetType</div>
<div class="t s" style="right:138.0px;top:909.0px;font-size:19px;font-weight:400;color:#5a6472;letter-spacing:-0.013px;">ernStraPct1</div>
<div class="t s" style="left:1850.0px;top:909.0px;font-size:19px;font-weight:400;color:#5a6472;">con</div>
<div class="t s" style="left:118.0px;top:962.0px;font-size:17.2px;font-weight:400;color:#1d2127;letter-spacing:1.389px;">AMD</div>
<div class="t s" style="left:222.4px;top:962.0px;font-size:17.2px;font-weight:400;color:#1d2127;letter-spacing:-0.033px;">ADVANCED MICRO DEVICES</div>
<div class="t s" style="right:1261.5px;top:962.0px;font-size:17.2px;font-weight:400;color:#1d2127;letter-spacing:0.664px;">74.63</div>
<div class="t s" style="right:1074.5px;top:962.0px;font-size:17.2px;font-weight:400;color:#1d2127;letter-spacing:0.713px;">22,543,436</div>
<div class="t s" style="right:887.0px;top:962.0px;font-size:17.2px;font-weight:400;color:#1d2127;letter-spacing:0.561px;">177141</div>
<div class="t s" style="right:699.0px;top:962.0px;font-size:17.2px;font-weight:400;color:#1d2127;letter-spacing:0.789px;">0.029</div>
<div class="t s" style="right:511.4px;top:962.0px;font-size:17.2px;font-weight:400;color:#1d2127;">0</div>
<div class="t s" style="right:324.5px;top:962.0px;font-size:17.2px;font-weight:400;color:#1d2127;">0</div>
<div class="t s" style="right:138.0px;top:962.0px;font-size:17.2px;font-weight:400;color:#1d2127;letter-spacing:0.514px;">12.33</div>
<div class="t s" style="left:118.0px;top:1014.0px;font-size:17.2px;font-weight:400;color:#1d2127;letter-spacing:0.565px;">META</div>
<div class="t s" style="left:222.4px;top:1014.0px;font-size:17.2px;font-weight:400;color:#1d2127;letter-spacing:0.108px;">ROUNDHILL BALL METAVERSE E...</div>
<div class="t s" style="right:1261.5px;top:1014.0px;font-size:17.2px;font-weight:400;color:#1d2127;letter-spacing:0.618px;">144.69</div>
<div class="t s" style="right:1074.5px;top:1014.0px;font-size:17.2px;font-weight:400;color:#1d2127;letter-spacing:0.623px;">9,568,503</div>
<div class="t s" style="right:887.0px;top:1014.0px;font-size:17.2px;font-weight:400;color:#1d2127;letter-spacing:0.561px;">152714</div>
<div class="t s" style="right:699.0px;top:1014.0px;font-size:17.2px;font-weight:400;color:#1d2127;letter-spacing:0.789px;">0.018</div>
<div class="t s" style="right:511.4px;top:1014.0px;font-size:17.2px;font-weight:400;color:#1d2127;">0</div>
<div class="t s" style="right:324.5px;top:1014.0px;font-size:17.2px;font-weight:400;color:#1d2127;">0</div>
<div class="t s" style="right:138.0px;top:1014.0px;font-size:17.2px;font-weight:400;color:#1d2127;letter-spacing:0.174px;">15.6</div>
<div class="a" style="left:1881px;top:0px;width:13px;height:1074px;background:#fff"></div>
<div class="a" style="left:0px;top:1062px;width:1894px;height:12px;background:#fff"></div>
<div class="a" style="left:0px;top:0px;width:1894px;height:10px;background:#fff"></div>
<div class="a" style="left:0px;top:0px;width:9px;height:1074px;background:#fff"></div>
</div>
</body></html>
